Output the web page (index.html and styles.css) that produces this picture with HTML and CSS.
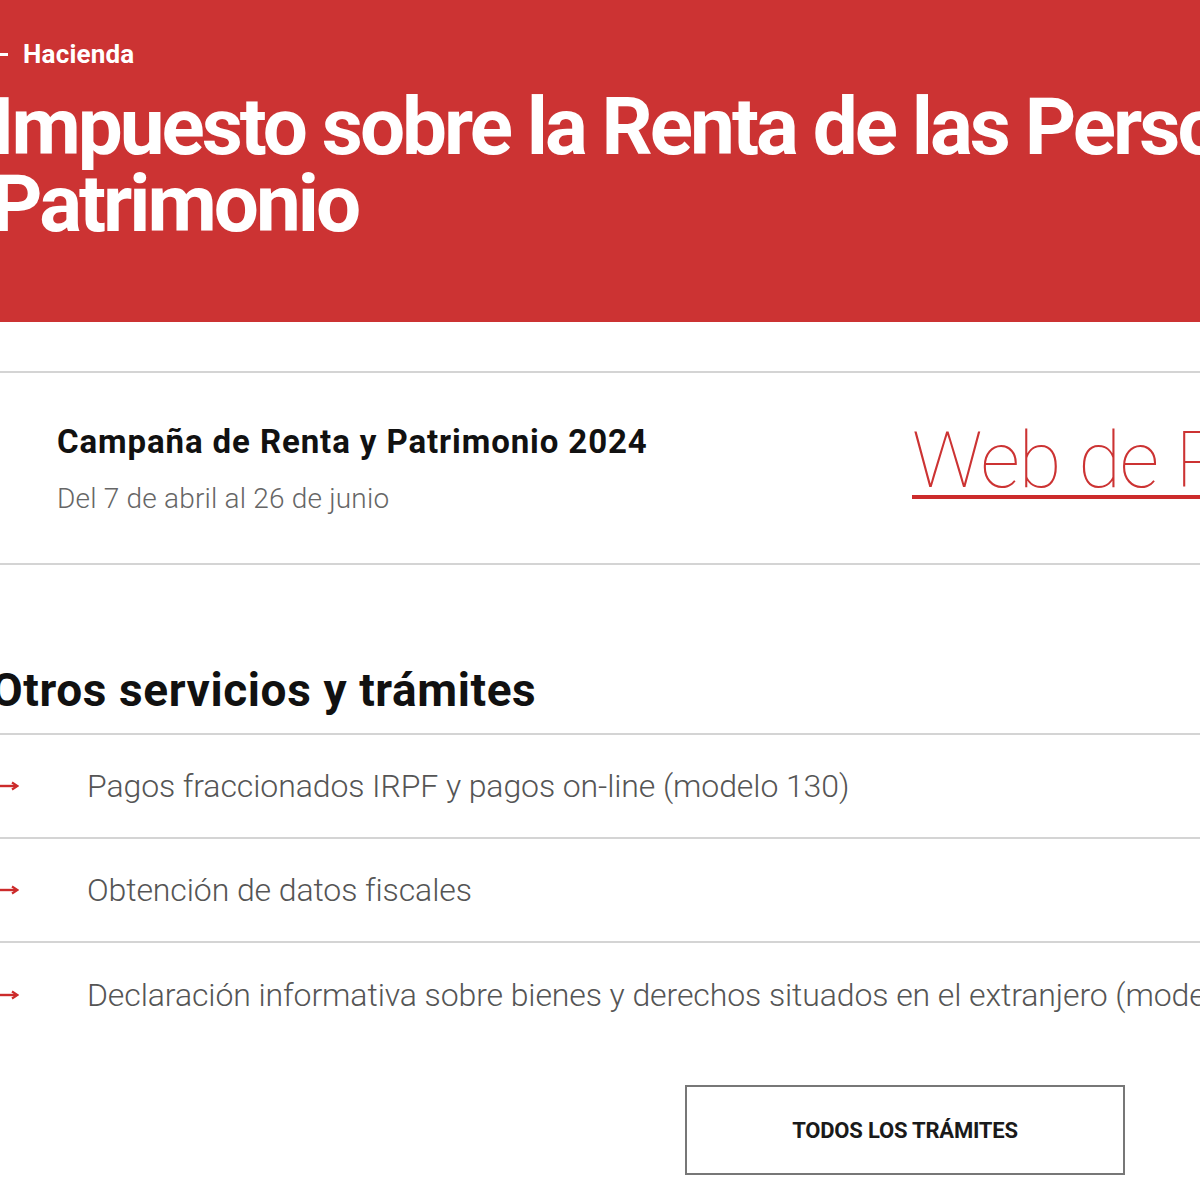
FILE: index.html
```html
<!DOCTYPE html>
<html lang="es">
<head>
<meta charset="utf-8">
<title>Impuesto sobre la Renta de las Personas Físicas y Patrimonio</title>
<link rel="stylesheet" href="styles.css">
</head>
<body>
<div class="page">
  <header class="hero">
    <div class="crumb"><span class="dash"></span><span>Hacienda</span></div>
    <h1 class="hero-title">Impuesto sobre la Renta de las Personas Físicas y<br>Patrimonio</h1>
  </header>

  <section class="campaign">
    <div class="campaign-text">
      <h2 class="campaign-title">Campaña de Renta y Patrimonio 2024</h2>
      <p class="campaign-dates">Del 7 de abril al 26 de junio</p>
    </div>
    <a class="campaign-link" href="#">Web de Renta 2024</a>
  </section>

  <section class="services">
    <h2 class="services-title">Otros servicios y trámites</h2>
    <ul class="service-list">
      <li class="service-item">
        <svg class="arrow" viewBox="0 0 28 10" width="28" height="10" aria-hidden="true"><path d="M0 5H25" stroke="#cc2b2b" stroke-width="2.4"/><path d="M21 1.5L26.5 5L21 8.5" fill="none" stroke="#cc2b2b" stroke-width="2.2"/></svg>
        <span>Pagos fraccionados IRPF y pagos on-line (modelo 130)</span>
      </li>
      <li class="service-item">
        <svg class="arrow" viewBox="0 0 28 10" width="28" height="10" aria-hidden="true"><path d="M0 5H25" stroke="#cc2b2b" stroke-width="2.4"/><path d="M21 1.5L26.5 5L21 8.5" fill="none" stroke="#cc2b2b" stroke-width="2.2"/></svg>
        <span>Obtención de datos fiscales</span>
      </li>
      <li class="service-item last">
        <svg class="arrow" viewBox="0 0 28 10" width="28" height="10" aria-hidden="true"><path d="M0 5H25" stroke="#cc2b2b" stroke-width="2.4"/><path d="M21 1.5L26.5 5L21 8.5" fill="none" stroke="#cc2b2b" stroke-width="2.2"/></svg>
        <span>Declaración informativa sobre bienes y derechos situados en el extranjero (modelo 720)</span>
      </li>
    </ul>
    <div class="actions">
      <a class="btn" href="#">TODOS LOS TRÁMITES</a>
    </div>
  </section>
</div>
</body>
</html>
```

FILE: styles.css
```css
html, body {
  margin: 0;
  padding: 0;
  background: #ffffff;
}
body {
  width: 1200px;
  height: 1200px;
  overflow: hidden;
  font-family: Roboto, "Liberation Sans", Arial, sans-serif;
  color: #1a1a1a;
}
.page {
  margin-left: -9px;
  width: 1400px;
}
.hero {
  background: #cc3333;
  height: 322px;
  box-sizing: border-box;
  padding-top: 36px;
  color: #ffffff;
}
.crumb {
  display: flex;
  align-items: center;
  gap: 15px;
  font-weight: 700;
  font-size: 26px;
  line-height: 36px;
  letter-spacing: 0.2px;
}
.dash {
  display: block;
  width: 17px;
  height: 3px;
  background: #ffffff;
}
.hero-title {
  margin: 0;
  margin-top: 17px;
  font-size: 80px;
  font-weight: 700;
  line-height: 77px;
  letter-spacing: -3px;
  white-space: nowrap;
}
.campaign {
  margin-top: 49px;
  border-top: 2px solid #d4d4d4;
  border-bottom: 2px solid #d4d4d4;
  height: 194px;
  box-sizing: border-box;
  display: flex;
  align-items: flex-start;
  padding-left: 66px;
}
.campaign-text {
  flex: none;
  width: 855px;
  padding-top: 50px;
}
.campaign-title {
  margin: 0;
  font-size: 33px;
  font-weight: 700;
  line-height: 38px;
  letter-spacing: 0.9px;
  color: #111;
}
.campaign-dates {
  margin: 21px 0 0;
  font-size: 28px;
  font-weight: 300;
  line-height: 34px;
  color: #666;
  letter-spacing: 0.2px;
}
.campaign-link {
  flex: none;
  margin-top: 48px;
  font-size: 78px;
  font-weight: 100;
  line-height: 80px;
  color: #cc3333;
  text-decoration: none;
  white-space: nowrap;
  border-bottom: 4px solid #cc2b2b;
  letter-spacing: -1px;
  height: 74px;
  display: block;
}
.services {
  padding-top: 100px;
}
.services-title {
  margin: 0;
  font-size: 46px;
  font-weight: 700;
  line-height: 50px;
  letter-spacing: 0.6px;
  color: #111;
  padding-bottom: 18px;
  border-bottom: 2px solid #d4d4d4;
}
.service-list {
  list-style: none;
  margin: 0;
  padding: 0;
}
.service-item {
  display: flex;
  align-items: center;
  height: 104px;
  box-sizing: border-box;
  border-bottom: 2px solid #d4d4d4;
  font-size: 32px;
  font-weight: 300;
  color: #555;
  white-space: nowrap;
  letter-spacing: -0.1px;
}
.service-item.last {
  border-bottom: none;
}
.arrow {
  flex: none;
  width: 28px;
  height: 10px;
  margin-right: 68px;
}
.actions {
  display: flex;
  padding-left: 694px;
  padding-top: 38px;
}
.btn {
  display: flex;
  align-items: center;
  justify-content: center;
  width: 440px;
  height: 90px;
  box-sizing: border-box;
  border: 2px solid #777;
  font-size: 22px;
  font-weight: 700;
  color: #1a1a1a;
  text-decoration: none;
  letter-spacing: -0.2px;
}
```
